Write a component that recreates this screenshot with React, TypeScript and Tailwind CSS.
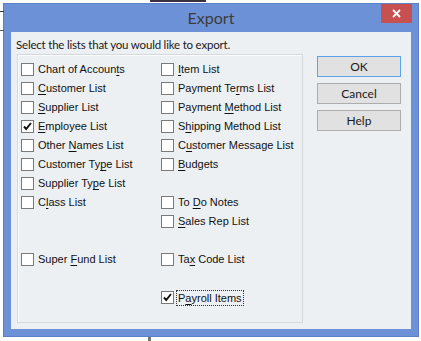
import React from "react";

type Item = { label: string; checked?: boolean; focus?: boolean } | null;

// "&" marks the mnemonic letter, as in the Win32 resource strings
const left: Item[] = [
  { label: "Chart of Accoun&ts" },
  { label: "&Customer List" },
  { label: "&Supplier List" },
  { label: "&Employee List", checked: true },
  { label: "Other &Names List" },
  { label: "Customer Ty&pe List" },
  { label: "Supplier Ty&pe List" },
  { label: "C&lass List" },
  null,
  null,
  { label: "Super &Fund List" },
];

const right: Item[] = [
  { label: "&Item List" },
  { label: "Payment Te&rms List" },
  { label: "Payment &Method List" },
  { label: "S&hipping Method List" },
  { label: "C&ustomer Message List" },
  { label: "&Budgets" },
  null,
  { label: "To &Do Notes" },
  { label: "&Sales Rep List" },
  null,
  { label: "Ta&x Code List" },
  null,
  { label: "P&ayroll Items", checked: true, focus: true },
];

function Label({ text }: { text: string }) {
  const i = text.indexOf("&");
  if (i < 0) return <>{text}</>;
  return (
    <>
      {text.slice(0, i)}
      <span className="underline underline-offset-[2px]">{text[i + 1]}</span>
      {text.slice(i + 2)}
    </>
  );
}

function CheckBox({ checked }: { checked?: boolean }) {
  return (
    <span className="w-[13px] h-[13px] shrink-0 border border-[#7a7a7a] bg-white flex items-center justify-center">
      {checked && (
        <svg width="11" height="11" viewBox="0 0 11 11">
          <path d="M2 5.5 L4.2 8 L9 2" stroke="#111" strokeWidth="1.9" fill="none" />
        </svg>
      )}
    </span>
  );
}

function Column({ items, className }: { items: Item[]; className: string }) {
  return (
    <div className={className}>
      {items.map((it, idx) =>
        it ? (
          <div key={idx} className="h-[19px] flex items-center">
            <CheckBox checked={it.checked} />
            <span
              className={
                it.focus
                  ? "ml-[3px] px-[1px] leading-[14px] outline outline-1 outline-dotted outline-[#333]"
                  : "ml-[4px]"
              }
            >
              <Label text={it.label} />
            </span>
          </div>
        ) : (
          <div key={idx} className="h-[19px]" />
        )
      )}
    </div>
  );
}

function Button({ text, primary }: { text: string; primary?: boolean }) {
  return (
    <button
      className={
        "w-[84px] h-[21px] bg-[#e1e1e1] text-[12px] text-[#1a1a1a] flex items-center justify-center border " +
        (primary ? "border-[#5aa3e8]" : "border-[#adadad]")
      }
    >
      {text}
    </button>
  );
}

export default function App() {
  return (
    <div className="relative w-[421px] h-[341px] bg-white overflow-hidden pl-[3px] pt-[3px] font-['Lato',sans-serif]">
      {/* bits of the application behind the dialog */}
      <div className="absolute left-0 top-[11px] w-[4px] h-[1px] bg-[#333]" />
      <div className="absolute left-0 top-[30px] w-[4px] h-[1px] bg-[#555]" />
      <div className="absolute left-[150px] top-0 w-[56px] h-[2px] bg-[#3a3040]" />
      <div className="absolute left-[148px] top-[337px] w-[3px] h-[4px] bg-[#777]" />

      <div className="w-[416px] h-[334px] bg-[#6d91d6] border border-[#5b80c8] flex flex-col">
        <div className="h-[28px] grid grid-cols-[1fr_auto_1fr] items-start">
          <div />
          <div className="text-[16px] text-[#3c3c3c] leading-[28px]">Export</div>
          <div className="flex justify-end pr-[6px]">
            <div className="w-[31px] h-[19px] bg-[#c75050] flex items-center justify-center">
              <svg width="9" height="9" viewBox="0 0 9 9">
                <path d="M1 1 L8 8 M8 1 L1 8" stroke="#fff" strokeWidth="1.8" />
              </svg>
            </div>
          </div>
        </div>
        <div className="mx-[7px] h-[297px] bg-[#edf0f3] flex flex-col pl-[5px] pt-[5px]">
          <div className="text-[11.5px] tracking-[-0.2px] leading-[16px] text-[#1a1a1a]">
            Select the lists that you would like to export.
          </div>
          <div className="flex mt-[1px] ml-[1px]">
            <div className="w-[286px] h-[269px] border border-[#d5d9de] shadow-[inset_1px_1px_0_#fbfcfd] flex pt-[5px] pl-[3px] font-['Liberation_Sans',sans-serif] text-[11px] text-[#111]">
              <Column items={left} className="w-[140px]" />
              <Column items={right} className="flex-1" />
            </div>
            <div className="ml-[14px] mt-[2px] flex flex-col gap-[6px]">
              <Button text="OK" primary />
              <Button text="Cancel" />
              <Button text="Help" />
            </div>
          </div>
        </div>
      </div>
    </div>
  );
}
